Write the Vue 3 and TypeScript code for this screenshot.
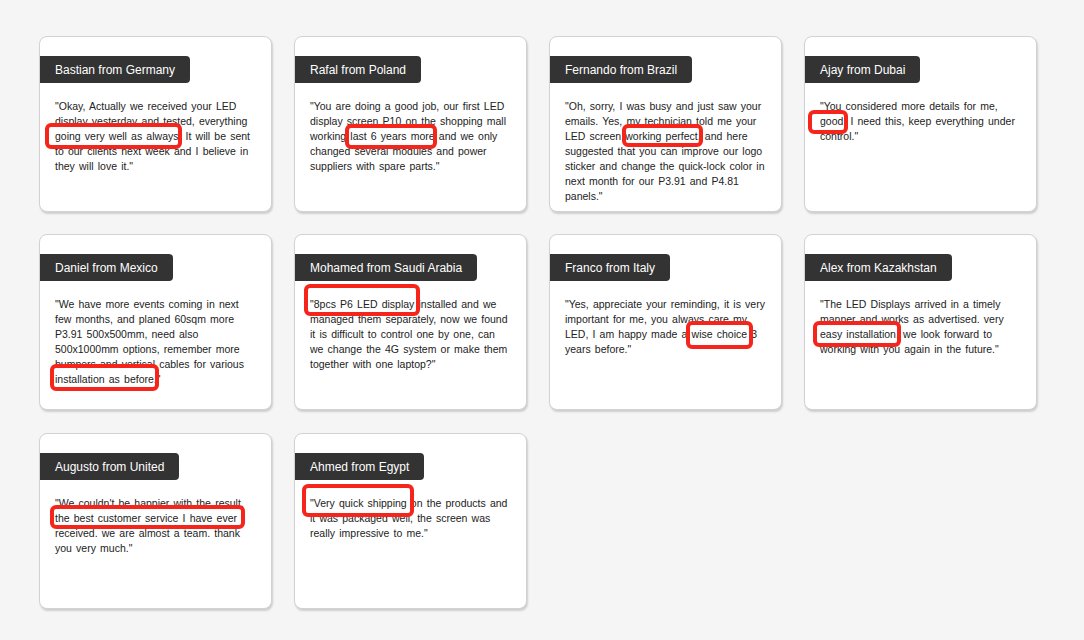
<script setup lang="ts">
interface Review {
  name: string
  text: string
  box: [number, number, number, number]
}
const reviews: Review[] = [
  { name: 'Bastian from Germany', text: '"Okay, Actually we received your LED display yesterday and tested, everything going very well as always. It will be sent to our clients next week and I believe in they will love it."', box: [5, 86, 137, 26] },
  { name: 'Rafal from Poland', text: '"You are doing a good job, our first LED display screen P10 on the shopping mall working last 6 years more and we only changed several modules and power suppliers with spare parts."', box: [50, 87, 92, 25] },
  { name: 'Fernando from Brazil', text: '"Oh, sorry, I was busy and just saw your emails. Yes, my technician told me your LED screen working perfect, and here suggested that you can improve our logo sticker and change the quick-lock color in next month for our P3.91 and P4.81 panels."', box: [72, 87, 81, 23] },
  { name: 'Ajay from Dubai', text: '"You considered more details for me, good, I need this, keep everything under control."', box: [3, 73, 40, 24] },
  { name: 'Daniel from Mexico', text: '"We have more events coming in next few months, and planed 60sqm more P3.91 500x500mm, need also 500x1000mm options, remember more bumpers and vertical cables for various installation as before."', box: [10, 129, 109, 27] },
  { name: 'Mohamed from Saudi Arabia', text: '"8pcs P6 LED display installed and we managed them separately, now we found it is difficult to control one by one, can we change the 4G system or make them together with one laptop?"', box: [9, 49, 116, 32] },
  { name: 'Franco from Italy', text: '"Yes, appreciate your reminding, it is very important for me, you always care my LED, I am happy made a wise choice 3 years before."', box: [136, 86, 67, 28] },
  { name: 'Alex from Kazakhstan', text: '"The LED Displays arrived in a timely manner and works as advertised. very easy installation, we look forward to working with you again in the future."', box: [8, 86, 88, 26] },
  { name: 'Augusto from United', text: '"We couldn\'t be happier with the result. the best customer service I have ever received. we are almost a team. thank you very much."', box: [10, 71, 195, 24] },
  { name: 'Ahmed from Egypt', text: '"Very quick shipping on the products and it was packaged well, the screen was really impressive to me."', box: [7, 50, 112, 33] },
]
function boxStyle(b: [number, number, number, number]) {
  return { left: `${b[0]}px`, top: `${b[1]}px`, width: `${b[2]}px`, height: `${b[3]}px` }
}
</script>

<template>
  <main class="page">
    <article v-for="r in reviews" :key="r.name" class="card">
      <h3 class="title">{{ r.name }}</h3>
      <p class="quote">{{ r.text }}</p>
      <span class="mark" :style="boxStyle(r.box)"></span>
    </article>
  </main>
</template>

<style>
html, body { margin: 0; background: #f5f5f5; }
</style>

<style scoped>
.page {
  box-sizing: border-box;
  width: 1084px;
  height: 640px;
  overflow: hidden;
  padding: 36px 0 0 39px;
  display: grid;
  grid-template-columns: repeat(4, 233px);
  grid-auto-rows: 176px;
  column-gap: 22px;
  row-gap: 22.25px;
  background: #f5f5f5;
  font-family: "Liberation Sans", Arial, sans-serif;
}
.card {
  position: relative;
  box-sizing: border-box;
  background: #fff;
  border: 1px solid #d2d2d2;
  border-radius: 8px;
  box-shadow: 1px 2px 2px rgba(0, 0, 0, 0.16);
  padding-top: 19px;
}
.title {
  display: table;
  margin: 0;
  background: #333;
  color: #fff;
  font-size: 12px;
  font-weight: 400;
  line-height: 25px;
  padding: 2px 15px 0;
  border-radius: 0 4px 4px 0;
}
.quote {
  margin: 16px 15px 0;
  color: #222;
  font-size: 10.5px;
  line-height: 15px;
  word-spacing: 1.25px;
}
.mark {
  position: absolute;
  box-sizing: border-box;
  border: 4px solid #f5251b;
  border-radius: 6px;
}
</style>
